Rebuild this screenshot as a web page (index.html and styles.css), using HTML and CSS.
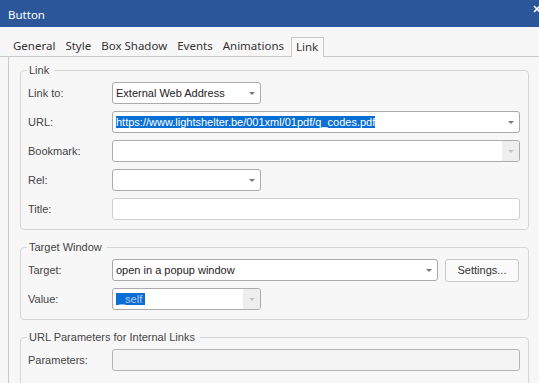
FILE: index.html
```html
<!DOCTYPE html>
<html>
<head>
<meta charset="utf-8">
<link rel="stylesheet" href="styles.css">
</head>
<body>
<div class="window">
  <div class="titlebar">
    <span class="title">Button</span>
    <svg class="close" width="8" height="8" viewBox="0 0 8 8"><path d="M1 1 L7 7 M7 1 L1 7" stroke="#ffffff" stroke-width="1.6"/></svg>
  </div>
  <div class="tabs">
    <span class="tab">General</span>
    <span class="tab">Style</span>
    <span class="tab">Box Shadow</span>
    <span class="tab">Events</span>
    <span class="tab">Animations</span>
    <span class="tab active">Link</span>
  </div>
  <div class="panel">
    <fieldset class="group g1">
      <legend>Link</legend>
      <div class="row">
        <span class="label">Link to:</span>
        <div class="field short combo"><span class="value">External Web Address</span><span class="arrow"></span></div>
      </div>
      <div class="row">
        <span class="label">URL:</span>
        <div class="field wide combo focus"><span class="value"><span class="sel">https://www.lightshelter.be/001xml/01pdf/q_codes.pdf</span></span><span class="arrow"></span></div>
      </div>
      <div class="row">
        <span class="label">Bookmark:</span>
        <div class="field wide combo"><span class="value"></span><span class="arrow dis"></span></div>
      </div>
      <div class="row">
        <span class="label">Rel:</span>
        <div class="field short combo"><span class="value"></span><span class="arrow"></span></div>
      </div>
      <div class="row">
        <span class="label">Title:</span>
        <div class="field wide light"></div>
      </div>
    </fieldset>
    <fieldset class="group g2">
      <legend>Target Window</legend>
      <div class="row">
        <span class="label">Target:</span>
        <div class="field target combo"><span class="value">open in a popup window</span><span class="arrow"></span></div>
        <button class="btn">Settings...</button>
      </div>
      <div class="row">
        <span class="label">Value:</span>
        <div class="field short combo"><span class="value"><span class="sel dim">_self</span></span><span class="arrow dis"></span></div>
      </div>
    </fieldset>
    <fieldset class="group g3">
      <legend>URL Parameters for Internal Links</legend>
      <div class="row">
        <span class="label">Parameters:</span>
        <div class="field wide disabled"></div>
      </div>
    </fieldset>
  </div>
</div>
</body>
</html>
```
FILE: styles.css
```css
html, body {
  margin: 0;
  padding: 0;
}
body {
  width: 539px;
  height: 383px;
  overflow: hidden;
  background: #f7f7f7;
  font-family: "Liberation Sans", Arial, sans-serif;
  font-size: 11px;
  color: #3a3a3a;
}
.window {
  display: flex;
  flex-direction: column;
  height: 383px;
}
.titlebar {
  height: 27px;
  flex: none;
  background: #2b579a;
  display: flex;
  align-items: center;
  justify-content: space-between;
  padding: 0 0 0 8px;
}
.title {
  font-family: "Noto Sans", sans-serif;
  font-size: 11.5px;
  color: #ffffff;
  margin-top: 1px;
}
.close {
  margin-right: -2px;
  margin-top: -9px;
}
.tabs {
  display: flex;
  flex: none;
  align-items: flex-end;
  height: 29px;
  padding-left: 8px;
  border-bottom: 1px solid #c9c9c9;
  margin-right: -20px;
  font-family: "Noto Sans", sans-serif;
  font-size: 11.5px;
  color: #333;
}
.tab {
  padding: 0 5px 2px 5px;
  line-height: 16px;
}
.tab.active {
  border: 1px solid #c9c9c9;
  border-bottom: none;
  background: #f9f9f9;
  margin-bottom: -1px;
  padding: 1px 5px 2px 4px;
  margin-left: 2px;
}
.panel {
  flex: 1;
  min-height: 0;
  overflow: hidden;
  border-left: 1px solid #c9c9c9;
  margin-left: 8px;
  padding: 6px 10px 0 11px;
  display: flex;
  flex-direction: column;
  gap: 10px;
}
.group {
  margin: 0;
  flex: none;
  border: 1px solid #d6d6d6;
  border-radius: 4px;
  padding: 5px 7px 9px 7px;
  display: flex;
  flex-direction: column;
  gap: 7px;
}
.group.g3 {
  padding-bottom: 40px;
}
.group legend {
  padding: 0 5px 0 2px;
  margin-left: -1px;
  font-size: 11px;
  font-family: "Liberation Sans", Arial, sans-serif;
  color: #444;
  line-height: 14px;
}
.row {
  display: flex;
  align-items: center;
  height: 22px;
}
.label {
  width: 84px;
  flex: none;
  font-size: 11px;
  color: #444;
}
.field {
  height: 22px;
  box-sizing: border-box;
  border: 1px solid #ababab;
  border-radius: 3px;
  background: #ffffff;
  display: flex;
  align-items: center;
}
.field.light {
  border-color: #cfcfcf;
}
.field.disabled {
  border-color: #b4b4b4;
  background: #f4f4f4;
}
.short { width: 149px; }
.wide { width: 408px; }
.target { width: 326px; }
.value {
  flex: 1;
  padding-left: 3px;
  white-space: nowrap;
  overflow: hidden;
  font-size: 11px;
  color: #222;
}
.sel {
  background: #0a6fd4;
  color: #ffffff;
  padding: 1px 0;
}
.sel.dim {
  color: #b9c9e6;
  padding: 1px 3px;
}
.arrow {
  width: 17px;
  align-self: stretch;
  display: flex;
  align-items: center;
  justify-content: center;
}
.arrow::after {
  content: "";
  border-left: 3px solid transparent;
  border-right: 3px solid transparent;
  border-top: 3px solid #7a7a7a;
}
.arrow.dis {
  background: #eeeeee;
  border-radius: 0 2px 2px 0;
}
.arrow.dis::after {
  border-top-color: #c4c4c4;
}
.btn {
  margin-left: 7px;
  width: 74px;
  height: 23px;
  border: 1px solid #c9c9c9;
  border-radius: 3px;
  background: #fbfbfb;
  font-family: "Liberation Sans", Arial, sans-serif;
  font-size: 11px;
  color: #333;
  padding: 0;
}
.g2 .row:first-child .field { height: 23px; }
```
